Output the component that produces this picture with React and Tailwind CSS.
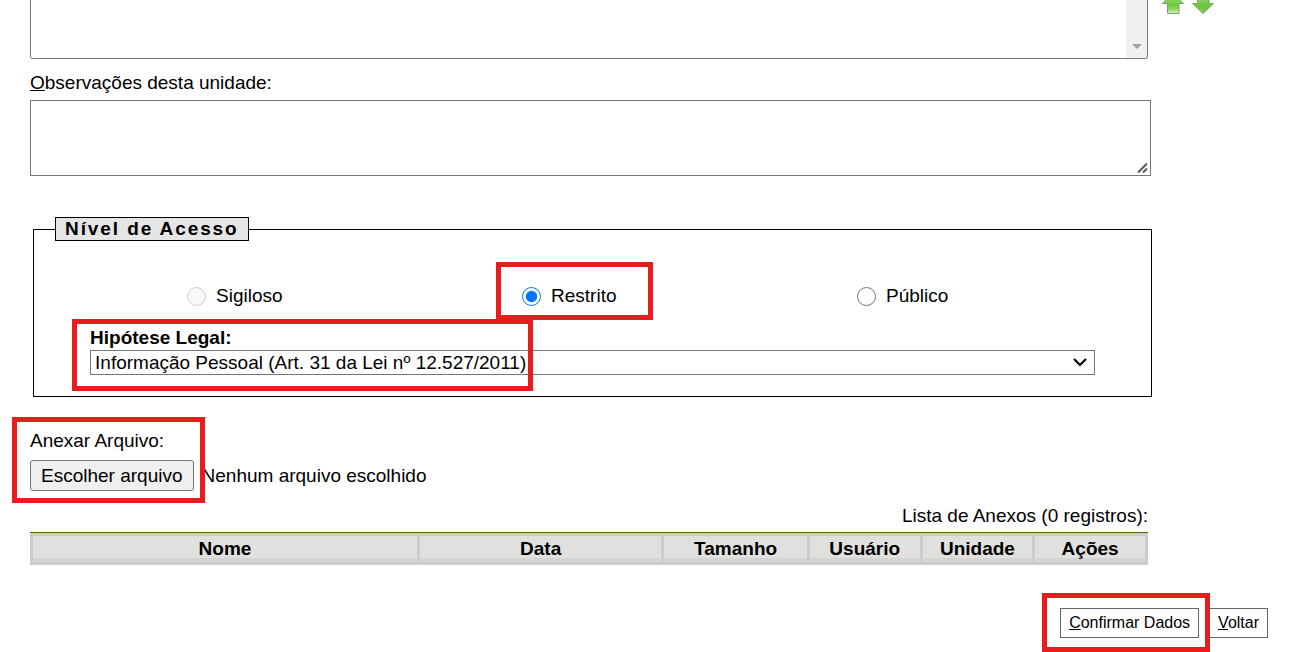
import React, { useRef, useState } from "react";

const colunas = [
  { nome: "Nome", largura: "w-[35%]" },
  { nome: "Data", largura: "w-[22%]" },
  { nome: "Tamanho", largura: "w-[13%]" },
  { nome: "Usuário", largura: "w-[10%]" },
  { nome: "Unidade", largura: "w-[10%]" },
  { nome: "Ações", largura: "w-[10%]" },
];

const niveis = [
  { id: "sigiloso", rotulo: "Sigiloso", desabilitado: true },
  { id: "restrito", rotulo: "Restrito", destaque: true },
  { id: "publico", rotulo: "Público" },
];

// moldura vermelha por cima do conteúdo
function Destaque({ className }) {
  return (
    <span
      className={"pointer-events-none absolute z-10 border-5 border-[#e81c1c] " + className}
    />
  );
}

function SetaCima() {
  return (
    <svg width="22" height="22" viewBox="0 0 22 22">
      <defs>
        <linearGradient id="verdeCima" x1="0" y1="0" x2="0" y2="1">
          <stop offset="0" stopColor="#a5dc7c" />
          <stop offset="0.6" stopColor="#6cc93c" />
          <stop offset="0.8" stopColor="#8fd765" />
          <stop offset="1" stopColor="#e2f3cf" />
        </linearGradient>
      </defs>
      <path
        d="M11 1 L21.5 11.5 H17 V21.5 H5.5 V11.5 H0.5 Z"
        fill="url(#verdeCima)"
        stroke="#78a868"
        strokeLinejoin="round"
      />
    </svg>
  );
}

function SetaBaixo() {
  return (
    <svg width="22" height="22" viewBox="0 0 22 22">
      <defs>
        <linearGradient id="verdeBaixo" x1="0" y1="0" x2="0" y2="1">
          <stop offset="0" stopColor="#b5e396" />
          <stop offset="0.6" stopColor="#69c63b" />
          <stop offset="1" stopColor="#7fca58" />
        </linearGradient>
      </defs>
      <path
        d="M11 21.5 L21.5 11.5 H17 V1 H5.5 V11.5 H0.5 Z"
        fill="url(#verdeBaixo)"
        stroke="#78a868"
        strokeLinejoin="round"
      />
    </svg>
  );
}

function App() {
  const [nivel, setNivel] = useState("restrito");
  const [arquivo, setArquivo] = useState("");
  const inputArquivo = useRef(null);

  return (
    <div className="overflow-hidden bg-white pl-[30px] pr-7 font-['Liberation_Sans',Arial,sans-serif] text-[19px] leading-6 text-black">
      <div className="flex h-[59px] items-start">
        <div className="mr-[14px] flex h-full flex-1 overflow-hidden rounded-b-[3px] border border-t-0 border-[#767676]">
          <select
            multiple
            aria-label="Interessados"
            className="h-full flex-1 appearance-none overflow-hidden bg-white outline-none"
          />
          <div className="flex w-[21px] items-end justify-center bg-[#f0f0f0] pb-[9px]">
            <svg width="10" height="5" viewBox="0 0 10 5">
              <path d="M0 0 H10 L5 5 Z" fill="#a3a3a3" />
            </svg>
          </div>
        </div>
        <div className="-mt-2 flex w-[106px] gap-2">
          <button type="button" aria-label="Mover para cima">
            <SetaCima />
          </button>
          <button type="button" aria-label="Mover para baixo">
            <SetaBaixo />
          </button>
        </div>
      </div>

      <div className="mr-[117px]">
        <label htmlFor="observacoes" className="mt-3 block">
          <u>O</u>bservações desta unidade:
        </label>
        <div className="relative mt-[5px]">
          <textarea
            id="observacoes"
            className="block h-[76px] w-full resize-none border border-[#767676] px-1 outline-none"
          />
          <svg
            className="pointer-events-none absolute bottom-0.5 right-0.5"
            width="12"
            height="12"
            viewBox="0 0 12 12"
          >
            <path
              d="M1 10.5 L10 1.5 M6 10.5 L10 6.5"
              stroke="#58585c"
              strokeWidth="2"
              fill="none"
            />
          </svg>
        </div>

        <fieldset className="-mr-px ml-[3px] mt-[41px] border border-black pb-[21px] pl-[5%]">
          <legend className="-ml-[35px] border border-black bg-[#e5e5e5] px-[9px] text-[19px] leading-[22px] font-bold tracking-widest">
            Nível de Acesso
          </legend>
          <div className="ml-[97px] flex pt-[43px]">
            {niveis.map((n) => (
              <div key={n.id} className="w-[335px] shrink-0 last:w-auto">
                <div className="relative flex w-fit items-center gap-[10px]">
                  <input
                    type="radio"
                    name="nivel"
                    id={n.id}
                    className="m-0 size-[19px] accent-[#0075ff]"
                    checked={nivel === n.id}
                    disabled={n.desabilitado}
                    onChange={() => setNivel(n.id)}
                  />
                  <label htmlFor={n.id}>{n.rotulo}</label>
                  {n.destaque && (
                    <Destaque className="-left-[26px] -right-9 -top-[22px] -bottom-3" />
                  )}
                </div>
              </div>
            ))}
          </div>
          <div className="relative mr-14 mt-[18px]">
            <label htmlFor="hipotese" className="block font-bold">
              Hipótese Legal:
            </label>
            <div className="relative">
              <select
                id="hipotese"
                className="block h-[25px] w-full appearance-none border border-[#767676] bg-white pl-1 pr-8 leading-[23px] outline-none"
              >
                <option>Informação Pessoal (Art. 31 da Lei nº 12.527/2011)</option>
              </select>
              <svg
                className="pointer-events-none absolute right-2 top-2"
                width="14"
                height="9"
                viewBox="0 0 14 9"
              >
                <path d="M1 1 L7 7 L13 1" stroke="#000" strokeWidth="2.2" fill="none" />
              </svg>
            </div>
            <Destaque className="-left-[18px] -top-[7px] -bottom-4 w-[461px]" />
          </div>
        </fieldset>

        <div className="mt-8 flex">
          <div className="relative">
            <label htmlFor="arquivo" className="block">
              Anexar Arquivo:
            </label>
            <button
              type="button"
              className="mt-[7px] block h-[31px] rounded-[3px] border border-[#767676] bg-[#efefef] px-[10px] leading-[27px]"
              onClick={() => inputArquivo.current.click()}
            >
              Escolher arquivo
            </button>
            <input
              ref={inputArquivo}
              id="arquivo"
              type="file"
              className="hidden"
              onChange={(e) => setArquivo(e.target.files[0] ? e.target.files[0].name : "")}
            />
            <Destaque className="-left-[18px] -right-[11px] -top-3 -bottom-3" />
          </div>
          <span className="ml-2 self-end pb-[3px]">{arquivo || "Nenhum arquivo escolhido"}</span>
        </div>

        <div className="mr-[3px] mt-[13px]">
          <table className="w-full table-fixed border-separate border-spacing-[3px] border-t border-[#4b6a00] bg-[#cccccc]">
            <caption className="pb-1 text-right">Lista de Anexos (0 registros):</caption>
            <thead>
              <tr>
                {colunas.map((c) => (
                  <th
                    key={c.nome}
                    className={
                      "bg-linear-to-b from-[#e0e0de] from-85% to-[#d4d4d2] to-85% p-0 leading-[26px] font-bold " +
                      c.largura
                    }
                  >
                    {c.nome}
                  </th>
                ))}
              </tr>
            </thead>
          </table>
        </div>
      </div>

      <div className="mt-[43px] flex justify-end gap-[10px] pb-[14px] text-base">
        <div className="relative">
          <button type="button" className="block h-[30px] border border-[#666] bg-white px-2 leading-7">
            <u>C</u>onfirmar Dados
          </button>
          <Destaque className="-left-[18px] -right-[11px] -top-[15px] -bottom-[14px]" />
        </div>
        <button type="button" className="block h-[30px] border border-[#666] bg-white px-2 leading-7">
          <u>V</u>oltar
        </button>
      </div>
    </div>
  );
}

export default App;
